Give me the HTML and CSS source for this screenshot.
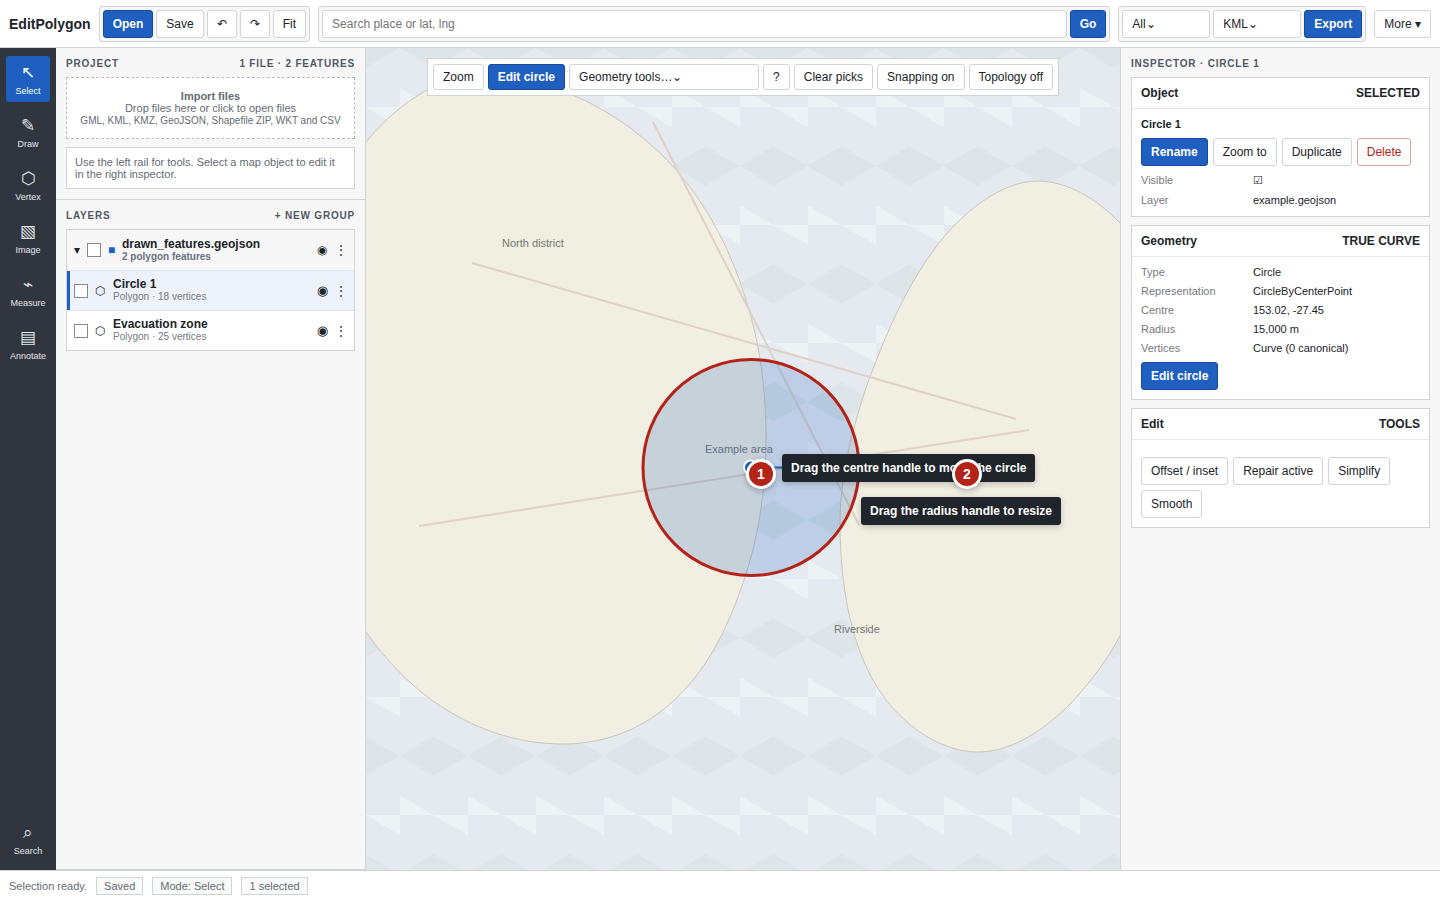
FILE: index.html
```html
<!DOCTYPE html>
<html lang="en">
<head>
<meta charset="utf-8">
<title>EditPolygon</title>
<link rel="stylesheet" href="styles.css">
</head>
<body>
<div class="app">
  <header class="topbar">
    <h1 class="brand">EditPolygon</h1>
    <div class="group">
      <button class="btn primary">Open</button>
      <button class="btn">Save</button>
      <button class="btn" aria-label="Undo">↶</button>
      <button class="btn" aria-label="Redo">↷</button>
      <button class="btn">Fit</button>
    </div>
    <form class="group search">
      <input class="field" type="text" aria-label="Search place" placeholder="Search place or lat, lng">
      <button class="btn primary" type="button">Go</button>
    </form>
    <div class="group">
      <select class="select" aria-label="Export scope"><option>All⌄</option></select>
      <select class="select" aria-label="Export format"><option>KML⌄</option></select>
      <button class="btn primary">Export</button>
    </div>
    <button class="btn">More ▾</button>
  </header>

  <main class="workspace">
    <nav class="rail" aria-label="Tools">
      <button class="tool active"><span class="tool-icon">↖</span>Select</button>
      <button class="tool"><span class="tool-icon">✎</span>Draw</button>
      <button class="tool"><span class="tool-icon">⬡</span>Vertex</button>
      <button class="tool"><span class="tool-icon">▧</span>Image</button>
      <button class="tool"><span class="tool-icon">⌁</span>Measure</button>
      <button class="tool"><span class="tool-icon">▤</span>Annotate</button>
      <button class="tool last"><span class="tool-icon">⌕</span>Search</button>
    </nav>

    <aside class="sidebar">
      <section class="section">
        <div class="heading"><h2>Project</h2><span>1 file · 2 features</span></div>
        <button class="dropzone">
          <strong>Import files</strong>
          <span>Drop files here or click to open files</span>
          <small>GML, KML, KMZ, GeoJSON, Shapefile ZIP, WKT and CSV</small>
        </button>
        <p class="note">Use the left rail for tools. Select a map object to edit it in the right inspector.</p>
      </section>
      <section class="section grow">
        <div class="heading"><h2>Layers</h2><button class="new-group">+ New group</button></div>
        <ul class="layers">
          <li class="layer group-row">
            <span class="caret">▾</span>
            <input class="check" type="checkbox" aria-label="drawn_features.geojson">
            <span class="swatch">■</span>
            <div class="layer-text"><strong>drawn_features.geojson</strong><small>2 polygon features</small></div>
            <button class="icon-btn" aria-label="Toggle visibility">◉</button>
            <button class="icon-btn" aria-label="More">⋮</button>
          </li>
          <li class="layer selected">
            <input class="check" type="checkbox" aria-label="Circle 1">
            <span class="hex">⬡</span>
            <div class="layer-text"><strong>Circle 1</strong><small>Polygon · 18 vertices</small></div>
            <button class="icon-btn eye" aria-label="Toggle visibility">◉</button>
            <button class="icon-btn" aria-label="More">⋮</button>
          </li>
          <li class="layer">
            <input class="check" type="checkbox" aria-label="Evacuation zone">
            <span class="hex">⬡</span>
            <div class="layer-text"><strong>Evacuation zone</strong><small>Polygon · 25 vertices</small></div>
            <button class="icon-btn eye" aria-label="Toggle visibility">◉</button>
            <button class="icon-btn" aria-label="More">⋮</button>
          </li>
        </ul>
      </section>
    </aside>

    <section class="map" aria-label="Map">
      <svg class="map-art" viewBox="0 0 754 822" preserveAspectRatio="xMidYMid slice">
        <g class="land">
          <path d="M0,94 C18,72 39,54 61,42 C110,18 160,26 209,48 C250,66 284,92 313,125 C342,160 365,202 380,252 C394,295 400,342 400,389 C400,440 393,488 378,532 C364,574 346,612 320,640 C285,680 240,696 197,696 C150,696 107,681 67,653 C42,635 20,612 0,584 L-20,555 L-20,120 Z"/>
          <path d="M754,175 C730,150 701,133 671,133 C636,133 594,165 567,203 C535,247 517,295 502,334 C487,378 474,428 474,475 C474,540 486,595 507,632 C529,672 571,704 612,704 C645,704 678,683 707,653 C726,632 741,612 754,588 L780,540 L780,210 Z"/>
        </g>
        <g class="road">
          <path d="M106,215 L650,371"/>
          <path d="M53,478 L663,382"/>
          <path d="M287,74 L493,477"/>
        </g>
        <g class="place">
          <text x="136" y="199">North district</text>
          <text x="339" y="405">Example area</text>
          <text x="468" y="585">Riverside</text>
        </g>
        <circle class="shape" cx="385" cy="419.5" r="108"/>
        <path class="radius-line" d="M385,419.5 H493"/>
        <circle class="handle" cx="385" cy="419.5" r="7"/>
      </svg>
      <div class="map-tools">
        <button class="btn">Zoom</button>
        <button class="btn primary">Edit circle</button>
        <select class="select wide" aria-label="Geometry tools"><option>Geometry tools…⌄</option></select>
        <button class="btn">?</button>
        <button class="btn">Clear picks</button>
        <button class="btn">Snapping on</button>
        <button class="btn">Topology off</button>
      </div>
      <div class="tip tip-centre">Drag the centre handle to move the circle</div>
      <div class="tip tip-radius">Drag the radius handle to resize</div>
      <div class="pin pin-one">1</div>
      <div class="pin pin-two">2</div>
    </section>

    <aside class="inspector">
      <div class="heading"><h2>Inspector · Circle 1</h2></div>
      <section class="card">
        <div class="card-head"><h3>Object</h3><span>SELECTED</span></div>
        <div class="card-body">
          <strong class="object-name">Circle 1</strong>
          <div class="actions">
            <button class="btn primary">Rename</button>
            <button class="btn">Zoom to</button>
            <button class="btn">Duplicate</button>
            <button class="btn danger">Delete</button>
          </div>
          <div class="props">
            <label for="visible">Visible</label><input class="visible-check" id="visible" type="checkbox" checked>
            <span class="key">Layer</span><span>example.geojson</span>
          </div>
        </div>
      </section>
      <section class="card">
        <div class="card-head"><h3>Geometry</h3><span>TRUE CURVE</span></div>
        <div class="card-body">
          <div class="props">
            <span class="key">Type</span><span>Circle</span>
            <span class="key">Representation</span><span>CircleByCenterPoint</span>
            <span class="key">Centre</span><span>153.02, -27.45</span>
            <span class="key">Radius</span><span>15,000 m</span>
            <span class="key">Vertices</span><span>Curve (0 canonical)</span>
          </div>
          <div class="actions"><button class="btn primary">Edit circle</button></div>
        </div>
      </section>
      <section class="card">
        <div class="card-head"><h3>Edit</h3><span>TOOLS</span></div>
        <div class="card-body">
          <div class="actions edit-actions">
            <button class="btn">Offset / inset</button>
            <button class="btn">Repair active</button>
            <button class="btn">Simplify</button>
            <button class="btn">Smooth</button>
          </div>
        </div>
      </section>
    </aside>
  </main>

  <footer class="status">
    <span>Selection ready.</span>
    <span class="pill">Saved</span>
    <span class="pill">Mode: Select</span>
    <span class="pill">1 selected</span>
  </footer>
</div>
</body>
</html>
```
FILE: styles.css
```css
:root {
  --blue: #1f5fbf;
  --blue-dark: #174c9c;
  --line: #d0d4d6;
  --text: #202429;
  --muted: #646b73;
  --panel: #f7f7f7;
}

* { box-sizing: border-box; }

body {
  margin: 0;
  color: var(--text);
  font-family: "Liberation Sans", Arial, sans-serif;
  font-size: 12px;
}

h1, h2, h3, p, ul { margin: 0; padding: 0; }

button, input, select { font: inherit; color: inherit; margin: 0; }

.app {
  display: flex;
  flex-direction: column;
  height: 100vh;
  background: #fff;
}

.topbar {
  display: flex;
  align-items: center;
  gap: 8px;
  height: 48px;
  padding: 0 9px;
  border-bottom: 1px solid var(--line);
}

.brand { font-size: 14px; }

.group {
  display: flex;
  gap: 3px;
  padding: 3px;
  border: 1px solid var(--line);
  border-radius: 3px;
  background: var(--panel);
}

.search { flex: 1; }

.btn, .select, .field {
  height: 28px;
  padding: 0 9px;
  border: 1px solid var(--line);
  border-radius: 3px;
  background: #fff;
  white-space: nowrap;
}

.field { flex: 1; min-width: 0; }
.field::placeholder { color: #757575; opacity: 1; }

.select { width: 88px; appearance: none; }

.primary {
  border-color: var(--blue-dark);
  background: var(--blue);
  color: #fff;
  font-weight: 700;
}

.danger { border-color: #d9a5a2; color: #b42318; }

.workspace { display: flex; flex: 1; min-height: 0; }

.rail {
  display: flex;
  flex-direction: column;
  gap: 7px;
  width: 56px;
  padding: 8px 6px;
  background: #31353e;
}

.tool {
  display: flex;
  flex-direction: column;
  align-items: center;
  height: 46px;
  padding: 5px 0 0;
  border: 0;
  border-radius: 3px;
  background: none;
  color: #e3e6ea;
  font-size: 9px;
  line-height: 10px;
}

.tool.active { background: var(--blue); color: #fff; }
.tool.last { margin-top: auto; }
.tool-icon { margin-bottom: 1px; font-size: 17px; line-height: 24px; }

.sidebar {
  display: flex;
  flex-direction: column;
  width: 310px;
  border-right: 1px solid var(--line);
  background: var(--panel);
}

.section { padding: 10px; border-bottom: 1px solid var(--line); }
.grow { flex: 1; }

.heading {
  display: flex;
  justify-content: space-between;
  margin-bottom: 8px;
  color: #505965;
  font-size: 10px;
  font-weight: 700;
  line-height: 11px;
  letter-spacing: 0.08em;
  text-transform: uppercase;
}

.heading h2 { font-size: 10px; }

.new-group {
  padding: 0;
  border: 0;
  background: none;
  letter-spacing: inherit;
  text-transform: inherit;
}

.dropzone {
  display: flex;
  flex-direction: column;
  align-items: center;
  width: 100%;
  padding: 12px 8px 10px;
  border: 1px dashed #b9bec2;
  background: #fff;
  color: var(--muted);
  font-size: 11px;
  line-height: 12px;
}

.dropzone small { font-size: 10px; line-height: 14px; }

.note {
  margin-top: 8px;
  padding: 8px;
  border: 1px solid var(--line);
  background: #fff;
  color: var(--muted);
  font-size: 11px;
  line-height: 12px;
}

.layers { border: 1px solid var(--line); background: #fff; list-style: none; }

.layer {
  display: flex;
  align-items: center;
  gap: 7px;
  height: 40px;
  padding: 0 7px;
  border-bottom: 1px solid #e2e6e9;
}

.layer:last-child { height: 39px; border-bottom: 0; }
.group-row { height: 41px; background: #f7f7f7; }
.selected { background: #edf2fb; box-shadow: inset 3px 0 var(--blue); }

.caret { width: 6px; line-height: 14px; }

.check {
  appearance: none;
  width: 14px;
  height: 14px;
  border: 1px solid #85898d;
  background: #fff;
}

.swatch { width: 7px; color: var(--blue); }
.hex { width: 11px; }

.layer-text { display: flex; flex: 1; flex-direction: column; min-width: 0; }
.layer-text strong { line-height: 13px; }
.layer-text small { color: #747b83; font-size: 10px; line-height: 12px; }
.group-row small { color: #69727e; font-weight: 700; }

.icon-btn {
  display: flex;
  justify-content: center;
  width: 12px;
  padding: 0;
  border: 0;
  background: none;
}

.eye { font-size: 13px; }

.map {
  position: relative;
  flex: 1;
  min-width: 0;
  overflow: hidden;
  background-color: #e5eaf1;
  background-image:
    linear-gradient(30deg, #dde5e8 12%, transparent 12.5%, transparent 87%, #dde5e8 87.5%),
    linear-gradient(150deg, #dde5e8 12%, transparent 12.5%, transparent 87%, #dde5e8 87.5%),
    linear-gradient(30deg, #edf2f5 12%, transparent 12.5%, transparent 87%, #edf2f5 87.5%);
  background-position: 0 0, 0 0, 34px 59px;
  background-size: 68px 118px;
}

.map-art { display: block; width: 100%; height: 100%; }
.land { fill: #f1eee2; stroke: #c9c7b8; stroke-width: 1; }
.road { fill: none; stroke: #ddd2c5; stroke-width: 2; }
.place { fill: #737873; font-size: 11px; }
.shape { fill: #1f5fbf33; stroke: #b42318; stroke-width: 3; }
.radius-line { stroke: var(--blue); stroke-width: 2; }
.handle { fill: var(--blue); stroke: #fff; stroke-width: 2; }

.map-tools {
  position: absolute;
  top: 10px;
  left: 50%;
  display: flex;
  gap: 4px;
  padding: 5px;
  border: 1px solid var(--line);
  background: #fff;
  transform: translateX(-50%);
}

.map-tools .btn, .map-tools .select { height: 26px; }
.map-tools .wide { width: 190px; }

.tip {
  position: absolute;
  padding: 7px 9px;
  border-radius: 3px;
  background: #20252c;
  box-shadow: 0 2px 6px #0003;
  color: #fff;
  font-weight: 700;
  line-height: 14px;
  white-space: nowrap;
}

.tip-centre { left: 416px; top: 406px; }
.tip-radius { left: 495px; top: 449px; }

.pin {
  position: absolute;
  top: 411px;
  width: 30px;
  height: 30px;
  border: 3px solid #fff;
  border-radius: 50%;
  background: #b42318;
  box-shadow: 0 2px 6px #0004;
  color: #fff;
  font-size: 14px;
  font-weight: 700;
  line-height: 24px;
  text-align: center;
}

.pin-one { left: 380px; }
.pin-two { left: 586px; }

.inspector {
  width: 320px;
  padding: 10px;
  border-left: 1px solid var(--line);
  background: var(--panel);
}

.card { border: 1px solid var(--line); background: #fff; }
.card + .card { margin-top: 8px; }

.card-head {
  display: flex;
  align-items: center;
  justify-content: space-between;
  height: 31px;
  padding: 0 9px;
  border-bottom: 1px solid #e4e7e9;
  font-weight: 700;
}

.card-head h3 { font-size: 12px; }

.card-body {
  display: flex;
  flex-direction: column;
  gap: 7px;
  padding: 9px;
}

.object-name { font-size: 11px; line-height: 13px; }

.actions { display: flex; flex-wrap: wrap; gap: 5px; }
.edit-actions { margin-top: 8px; }

.props {
  display: grid;
  grid-template-columns: 112px 1fr;
  row-gap: 6px;
  align-items: center;
  font-size: 11px;
  line-height: 13px;
}

.props label, .key { color: #747a81; }

.visible-check { appearance: none; justify-self: start; height: 15px; line-height: 15px; }
.visible-check::before { content: "☐"; }
.visible-check:checked::before { content: "☑"; }

.status {
  display: flex;
  align-items: center;
  gap: 9px;
  height: 30px;
  padding: 0 9px;
  border-top: 1px solid var(--line);
  color: var(--muted);
  font-size: 11px;
}

.pill {
  padding: 2px 7px;
  border: 1px solid var(--line);
  background: #f9fafa;
  line-height: 12px;
}
```
